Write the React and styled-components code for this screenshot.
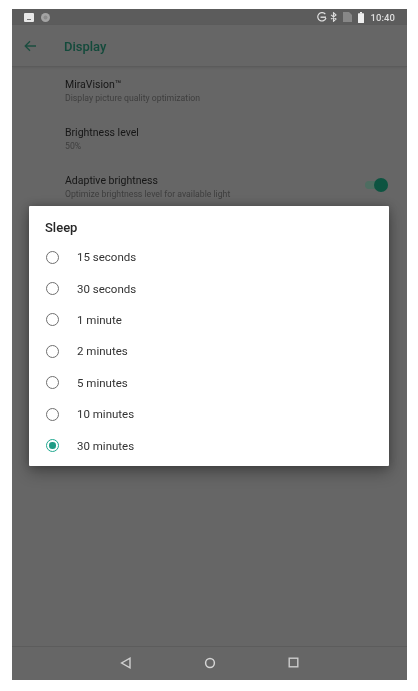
import React from "react";
import styled, { createGlobalStyle } from "styled-components";

const Global = createGlobalStyle`
  html, body { margin: 0; padding: 0; background: #fff; }
  body { font-family: Roboto, "Liberation Sans", sans-serif; }
`;

const Page = styled.div`
  width: 418px;
  height: 691px;
  padding: 9px 11px 11px 12px;
  box-sizing: border-box;
  overflow: hidden;
  filter: blur(0.45px);
`;

const Screen = styled.div`
  position: relative;
  width: 395px;
  height: 671px;
  background: #666666;
  display: flex;
  flex-direction: column;
  overflow: hidden;
`;

const StatusBar = styled.div`
  height: 16px;
  flex: none;
  background: #5c5c5c;
  display: flex;
  align-items: center;
  padding: 0 12px 0 12px;
  color: #e2e2e2;
`;

const StatusLeft = styled.div`
  display: flex;
  align-items: center;
  gap: 7px;
`;

const StatusRight = styled.div`
  margin-left: auto;
  display: flex;
  align-items: center;
  gap: 6px;
`;

const SyncIcon = styled.svg`
  margin-right: -3px;
`;

const Clock = styled.span`
  font-size: 9.5px;
  font-weight: 500;
  color: #dedede;
  letter-spacing: 0.1px;
`;

const AppBar = styled.div`
  height: 42px;
  flex: none;
  box-sizing: border-box;
  display: flex;
  align-items: center;
  padding: 2px 0 0 12px;
  border-bottom: 1px solid #5b5b5b;
  box-shadow: 0 1px 2px rgba(0, 0, 0, 0.08);
`;

const BackIcon = styled.svg`
  width: 13px;
  height: 12px;
  flex: none;
  margin-top: -1px;
`;

const AppTitle = styled.h1`
  margin: 0 0 0 27px;
  font-size: 13px;
  font-weight: 500;
  color: #134a3b;
`;

const List = styled.div`
  display: flex;
  flex-direction: column;
  padding: 11px 0 0 53px;
`;

const Row = styled.div`
  height: 48px;
  display: flex;
  align-items: flex-start;
  padding-right: 19px;
`;

const RowText = styled.div`
  display: flex;
  flex-direction: column;
  flex: 1;
`;

const RowTitle = styled.div`
  font-size: 10.5px;
  line-height: 14px;
  color: #161616;
`;

const RowSub = styled.div`
  font-size: 8.7px;
  line-height: 12px;
  color: #3e3e3e;
`;

const Switch = styled.div`
  position: relative;
  flex: none;
  width: 23px;
  height: 8px;
  margin-top: 7px;
  border-radius: 4px;
  background: #4e6d61;
`;

const Thumb = styled.div`
  position: absolute;
  right: 0;
  top: -3px;
  width: 14px;
  height: 14px;
  border-radius: 50%;
  background: #0d5441;
`;

const Spacer = styled.div`
  flex: 1;
`;

const NavBar = styled.div`
  height: 34px;
  flex: none;
  box-sizing: border-box;
  border-top: 1px solid #5c5c5c;
  display: flex;
  align-items: center;
  justify-content: center;
  gap: 72px;
  padding: 0 1px 2px 0;
`;

const Dialog = styled.div`
  position: absolute;
  left: 17px;
  top: 197px;
  width: 360px;
  height: 260px;
  background: #fff;
  border-radius: 1px;
  box-shadow: 0 6px 16px rgba(0, 0, 0, 0.32), 0 0 8px rgba(0, 0, 0, 0.2);
  box-sizing: border-box;
  padding: 14px 16px 0;
  display: flex;
  flex-direction: column;
`;

const DialogTitle = styled.h2`
  margin: 0 0 5.5px;
  font-size: 13px;
  line-height: 16px;
  font-weight: 500;
  color: #262626;
`;

const Option = styled.div`
  height: 31.4px;
  display: flex;
  align-items: center;
  gap: 18px;
`;

const Radio = styled.span`
  width: 13px;
  height: 13px;
  box-sizing: border-box;
  flex: none;
  margin-left: 1px;
  border-radius: 50%;
  border: 1.4px solid ${(p) => (p.$on ? "#1fa88f" : "#6f6f6f")};
  display: flex;
  align-items: center;
  justify-content: center;
`;

const Dot = styled.span`
  width: 6.5px;
  height: 6.5px;
  border-radius: 50%;
  background: #1f9c85;
`;

const OptionLabel = styled.span`
  font-size: 11.5px;
  color: #333333;
`;

const options = ["15 seconds", "30 seconds", "1 minute", "2 minutes", "5 minutes", "10 minutes", "30 minutes"];

export default function App() {
  return (
    <Page>
      <Global />
      <Screen>
        <StatusBar>
          <StatusLeft>
            <svg width="10" height="9" viewBox="0 0 10 9">
              <rect width="10" height="9" rx="1" fill="#e8e8e8" />
              <rect x="3" y="6" width="4" height="1" fill="#777" />
            </svg>
            <svg width="9" height="9" viewBox="0 0 9 9">
              <circle cx="4.5" cy="4.5" r="4.5" fill="#a4a4a4" />
              <circle cx="4.5" cy="4.5" r="2" fill="#8c8c8c" />
            </svg>
          </StatusLeft>
          <StatusRight>
            <SyncIcon width="10" height="10" viewBox="0 0 10 10" fill="none" stroke="#e0e0e0" strokeWidth="1.2">
              <path d="M8.3 2.2A4.2 4.2 0 1 0 9 6" />
              <path d="M3.5 5.2H9" strokeWidth="1.4" />
            </SyncIcon>
            <svg width="7" height="10" viewBox="0 0 7 10" fill="none" stroke="#dcdcdc" strokeWidth="1.1">
              <path d="M1 2.8 6 7 3.5 9.3V.7L6 3 1 7.2" />
            </svg>
            <svg width="9" height="10" viewBox="0 0 9 10">
              <path d="M0 0H6L9 3V10H0Z" fill="#878787" />
            </svg>
            <svg width="6" height="11" viewBox="0 0 6 11">
              <rect x="2" width="2" height="1.5" fill="#efefef" />
              <rect y="1.2" width="6" height="9.8" rx=".5" fill="#efefef" />
            </svg>
            <Clock>10:40</Clock>
          </StatusRight>
        </StatusBar>
        <AppBar>
          <BackIcon viewBox="0 0 13 12" fill="none" stroke="#1b4d3f" strokeWidth="1.3">
            <path d="M12 6H1.5M6 1.2 1.2 6 6 10.8" />
          </BackIcon>
          <AppTitle>Display</AppTitle>
        </AppBar>
        <List>
          <Row>
            <RowText>
              <RowTitle>MiraVision™</RowTitle>
              <RowSub>Display picture quality optimization</RowSub>
            </RowText>
          </Row>
          <Row>
            <RowText>
              <RowTitle>Brightness level</RowTitle>
              <RowSub>50%</RowSub>
            </RowText>
          </Row>
          <Row>
            <RowText>
              <RowTitle>Adaptive brightness</RowTitle>
              <RowSub>Optimize brightness level for available light</RowSub>
            </RowText>
            <Switch>
              <Thumb />
            </Switch>
          </Row>
        </List>
        <Spacer />
        <NavBar>
          <svg width="12" height="12" viewBox="0 0 12 12" fill="none" stroke="#d0d0d0" strokeWidth="1.4">
            <path d="M10 1.2V10.8L1.6 6Z" />
          </svg>
          <svg width="12" height="12" viewBox="0 0 12 12" fill="none" stroke="#d4d4d4" strokeWidth="1.5">
            <circle cx="6" cy="6" r="4.4" />
          </svg>
          <svg width="11" height="11" viewBox="0 0 11 11" fill="none" stroke="#cccccc" strokeWidth="1.4">
            <rect x="1.2" y="1.2" width="8.6" height="8.6" />
          </svg>
        </NavBar>
        <Dialog>
          <DialogTitle>Sleep</DialogTitle>
          {options.map((o) => (
            <Option key={o}>
              <Radio $on={o === "30 minutes"}>{o === "30 minutes" && <Dot />}</Radio>
              <OptionLabel>{o}</OptionLabel>
            </Option>
          ))}
        </Dialog>
      </Screen>
    </Page>
  );
}
